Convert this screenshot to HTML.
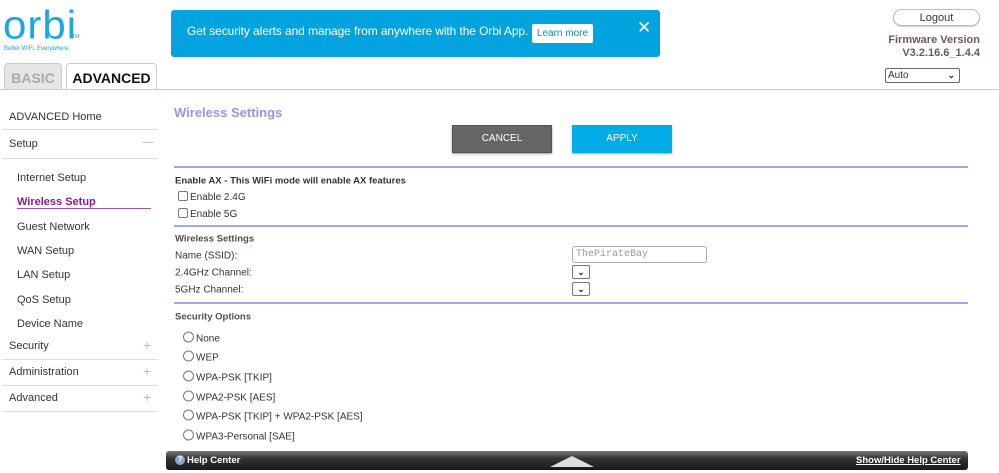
<!DOCTYPE html>
<html><head><meta charset="utf-8"><style>
*{margin:0;padding:0;box-sizing:border-box}
body{width:999px;height:473px;background:#fff;font-family:"Liberation Sans",Arial,sans-serif;position:relative;overflow:hidden;color:#333}
.a{position:absolute;white-space:nowrap}
.sep{position:absolute;left:2px;width:156px;height:1px;background:#ddd}
.nav{position:absolute;font-size:11px;color:#333;transform:translateY(-50%);margin-top:1px}
.pl{position:absolute;left:174px;width:794px;height:2px;background:#a9a3f2}
.t{font-size:10px;color:#333;position:absolute;transform:translateY(-50%);margin-top:1px}
.cb{display:inline-block;width:10px;height:10px;border:1px solid #777;border-radius:2px;vertical-align:-1px;margin-right:2px}
.rb{display:inline-block;width:11px;height:11px;border:1px solid #777;border-radius:50%;vertical-align:-1px;margin-right:2px}
.sel{position:absolute;width:18px;height:14px;border:1px solid #777;border-radius:2px;background:#fff;font-size:9px;font-weight:bold;text-align:center;line-height:12px}
</style></head><body>
<div class="a" style="left:3px;top:4px;font-size:42px;color:#1ba6e5;letter-spacing:1px;font-weight:normal;line-height:42px;transform:scaleY(0.95)">orbi</div>
<div class="a" style="left:72px;top:34px;font-size:5px;color:#1ba6e5">TM</div>
<div class="a" style="left:4px;top:46px;font-size:6px;color:#1ba6e5">Better WiFi. Everywhere.</div>
<div class="a" style="left:4px;top:63px;width:58px;height:27px;background:#e6e6e6;border:1px solid #ccc;border-bottom:none;border-radius:4px 4px 0 0;font-size:14px;font-weight:bold;color:#aaa;text-align:center;line-height:28px">BASIC</div>
<div class="a" style="left:66px;top:63px;width:91px;height:27px;background:#fff;border:1px solid #ccc;border-bottom:none;border-radius:4px 4px 0 0;font-size:14px;font-weight:bold;color:#111;text-align:center;line-height:28px">ADVANCED</div>
<div class="a" style="left:0;top:89px;width:999px;height:1px;background:#ccc"></div>
<div class="a" style="left:171px;top:10px;width:489px;height:47px;background:#02a3de;border-radius:3px"></div>
<div class="a" style="left:187px;top:24px;font-size:12px;color:#fff;letter-spacing:-0.1px">Get security alerts and manage from anywhere with the Orbi App.</div>
<div class="a" style="left:532px;top:24px;width:61px;height:19px;background:#fff;border-radius:2px;font-size:10px;color:#0a8ac5;text-align:center;line-height:19px">Learn more</div>
<div class="a" style="left:637px;top:18px;font-size:17px;color:#fff;line-height:20px">✕</div>
<div class="a" style="left:893px;top:9px;width:87px;height:17px;border:1px solid #bbb;border-radius:9px;font-size:11px;text-align:center;line-height:16px;color:#333;box-shadow:0 1px 1px #ccc">Logout</div>
<div class="a" style="right:19px;top:34px;font-size:11px;font-weight:bold;color:#6d5a55;text-align:right;line-height:13px">Firmware Version<br>V3.2.16.6_1.4.4</div>
<div class="a" style="left:885px;top:68px;width:75px;height:15px;border:1px solid #666;border-radius:2px;font-size:10px;line-height:13px;padding-left:2px">Auto<span style="position:absolute;right:4px;font-size:9px;font-weight:bold">⌄</span></div>
<div class="nav" style="left:9px;top:116px">ADVANCED Home</div>
<div class="sep" style="top:129px"></div>
<div class="nav" style="left:9px;top:143px">Setup</div><div class="a" style="left:143px;top:142px;width:10px;height:1px;background:#bbb"></div>
<div class="sep" style="top:158px"></div>
<div class="nav" style="left:17px;top:177px">Internet Setup</div>
<div class="nav" style="left:17px;top:201px;color:#8b1a8c;font-weight:bold">Wireless Setup</div>
<div class="a" style="left:17px;top:208px;width:134px;height:1px;background:#a050a8"></div>
<div class="nav" style="left:17px;top:226px">Guest Network</div>
<div class="nav" style="left:17px;top:250px">WAN Setup</div>
<div class="nav" style="left:17px;top:274px">LAN Setup</div>
<div class="nav" style="left:17px;top:299px">QoS Setup</div>
<div class="nav" style="left:17px;top:323px">Device Name</div>
<div class="nav" style="left:9px;top:345px">Security</div><div class="nav" style="left:143px;top:344px;color:#bbb;font-size:14px">+</div>
<div class="sep" style="top:359px"></div>
<div class="nav" style="left:9px;top:371px">Administration</div><div class="nav" style="left:143px;top:370px;color:#bbb;font-size:14px">+</div>
<div class="sep" style="top:385px"></div>
<div class="nav" style="left:9px;top:397px">Advanced</div><div class="nav" style="left:143px;top:396px;color:#bbb;font-size:14px">+</div>
<div class="sep" style="top:411px"></div>
<div class="a" style="left:174px;top:105px;font-size:13px;font-weight:bold;color:#9c91f0">Wireless Settings</div>
<div class="a" style="left:452px;top:125px;width:100px;height:28px;background:#666;border:1px solid #555;box-shadow:0 1px 2px #999;color:#fff;font-size:10px;text-align:center;line-height:26px">CANCEL</div>
<div class="a" style="left:572px;top:125px;width:100px;height:28px;background:#02ade6;box-shadow:0 1px 2px #aaa;color:#fff;font-size:10px;text-align:center;line-height:28px">APPLY</div>
<div class="pl" style="top:166px"></div>
<div class="t" style="left:175px;top:180px;font-weight:bold;font-size:9.5px">Enable AX - This WiFi mode will enable AX features</div>
<div class="t" style="left:178px;top:196px"><span class="cb"></span>Enable 2.4G</div>
<div class="t" style="left:178px;top:213px"><span class="cb"></span>Enable 5G</div>
<div class="pl" style="top:225px"></div>
<div class="t" style="left:175px;top:238px;font-weight:bold;font-size:9.5px;color:#5a4a48">Wireless Settings</div>
<div class="t" style="left:175px;top:255px">Name (SSID):</div>
<div class="a" style="left:572px;top:246px;width:135px;height:17px;border:1px solid #aaa;border-radius:3px;font-family:'Liberation Mono',monospace;font-size:10px;color:#999;padding-left:3px;line-height:15px">ThePirateBay</div>
<div class="t" style="left:175px;top:272px">2.4GHz Channel:</div>
<div class="sel" style="left:572px;top:265px">⌄</div>
<div class="t" style="left:175px;top:289px">5GHz Channel:</div>
<div class="sel" style="left:572px;top:282px">⌄</div>
<div class="pl" style="top:302px"></div>
<div class="t" style="left:175px;top:316px;font-weight:bold;font-size:9.5px;color:#5a4a48">Security Options</div>
<div class="t" style="left:183px;top:337px"><span class="rb"></span>None</div>
<div class="t" style="left:183px;top:356px"><span class="rb"></span>WEP</div>
<div class="t" style="left:183px;top:376px"><span class="rb"></span>WPA-PSK [TKIP]</div>
<div class="t" style="left:183px;top:396px"><span class="rb"></span>WPA2-PSK [AES]</div>
<div class="t" style="left:183px;top:415px"><span class="rb"></span>WPA-PSK [TKIP] + WPA2-PSK [AES]</div>
<div class="t" style="left:183px;top:435px"><span class="rb"></span>WPA3-Personal [SAE]</div>
<div class="a" style="left:166px;top:451px;width:802px;height:19px;background:linear-gradient(#777,#333 40%,#1a1a1a);border-radius:3px"></div>
<div class="a" style="left:175px;top:455px;width:10px;height:10px;border-radius:50%;background:#8fa0d8;color:#fff;font-size:8px;font-weight:bold;text-align:center;line-height:10px">?</div>
<div class="a" style="left:187px;top:455px;font-size:9.5px;font-weight:bold;color:#fff">Help Center</div>
<div class="a" style="left:550px;top:456px;width:0;height:0;border-left:22px solid transparent;border-right:22px solid transparent;border-bottom:11px solid #ddd"></div>
<div class="a" style="left:856px;top:455px;font-size:9.5px;font-weight:bold;color:#fff;text-decoration:underline">Show/Hide Help Center</div>
</body></html>
